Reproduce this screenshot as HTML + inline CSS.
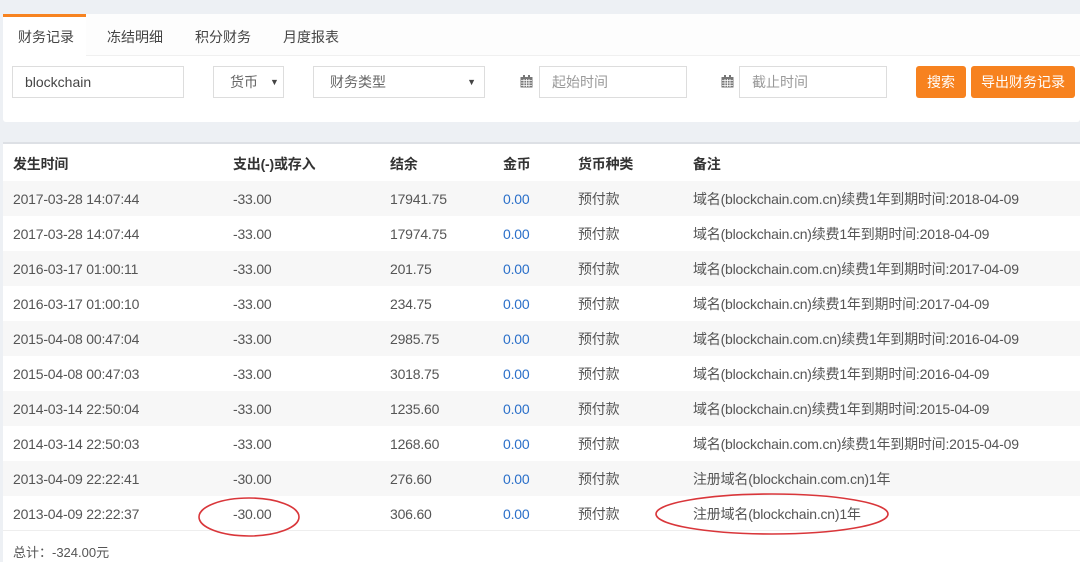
<!DOCTYPE html>
<html><head><meta charset="utf-8"><style>
*{margin:0;padding:0;box-sizing:border-box}
body{width:1080px;height:562px;overflow:hidden;background:#edf0f4;font-family:"Liberation Sans","Noto Sans CJK SC",sans-serif;color:#555;font-size:14px;position:relative}
.a{position:absolute}
.p1{left:3px;top:14px;width:1077px;height:108px;background:#fff;border-radius:3px}
.tabbar{left:3px;top:14px;width:1077px;height:42px;background:#fdfdfd;border-bottom:1px solid #f0f0f0}
.tab{top:0;height:42px;line-height:46px;font-size:14px;color:#444}
.act{left:3px;top:14px;width:83px;height:43px;background:#fff;border-top:3px solid #f78320}
.inp{height:32px;border:1px solid #ddd;background:#fff;line-height:30px;padding-left:12px;color:#999;font-size:14px}
.btn{background:#f7821f;color:#fff;height:32px;line-height:32px;text-align:center;border-radius:3px;font-size:14px}
.p2{left:3px;top:142px;width:1077px;height:420px;background:#fff;border-top:2px solid #dde0e5}
.row{left:3px;width:1077px;height:35px}
.row span{position:absolute;top:1px;line-height:35px;font-size:14px;color:#555;letter-spacing:-0.2px}
.hd span{font-weight:bold;color:#333;line-height:40px}
.b{color:#2a6fc9!important}
</style></head><body>
<div class="a p1"></div>
<div class="a tabbar"></div>
<div class="a act"></div>
<div class="a tab" style="left:18px;top:14px">财务记录</div>
<div class="a tab" style="left:107px;top:14px">冻结明细</div>
<div class="a tab" style="left:195px;top:14px">积分财务</div>
<div class="a tab" style="left:283px;top:14px">月度报表</div>
<div class="a inp" style="left:12px;top:66px;width:172px;color:#444">blockchain</div>
<div class="a inp" style="left:213px;top:66px;width:71px;padding-left:16px;color:#666">货币<span style="position:absolute;left:56px;font-size:9px;color:#444">▼</span></div>
<div class="a inp" style="left:313px;top:66px;width:172px;padding-left:16px;color:#666">财务类型<span style="position:absolute;right:8px;font-size:9px;color:#444">▼</span></div>
<svg class="a" style="left:520px;top:75px" width="13" height="13" viewBox="0 0 13 13"><rect x="0.5" y="2" width="12" height="10.5" fill="#777"/><rect x="3" y="0" width="2" height="3" fill="#777"/><rect x="8" y="0" width="2" height="3" fill="#777"/><path d="M1 5.5h11M1 8h11M1 10.5h11M4 4v8M6.5 4v8M9 4v8" stroke="#fff" stroke-width=".8"/></svg>
<div class="a inp" style="left:539px;top:66px;width:148px">起始时间</div>
<svg class="a" style="left:721px;top:75px" width="13" height="13" viewBox="0 0 13 13"><rect x="0.5" y="2" width="12" height="10.5" fill="#777"/><rect x="3" y="0" width="2" height="3" fill="#777"/><rect x="8" y="0" width="2" height="3" fill="#777"/><path d="M1 5.5h11M1 8h11M1 10.5h11M4 4v8M6.5 4v8M9 4v8" stroke="#fff" stroke-width=".8"/></svg>
<div class="a inp" style="left:739px;top:66px;width:148px">截止时间</div>
<div class="a btn" style="left:916px;top:66px;width:50px">搜索</div>
<div class="a btn" style="left:971px;top:66px;width:104px">导出财务记录</div>
<div class="a p2"></div>
<div class="a row hd" style="top:143px;height:38px"><span style="left:10px">发生时间</span><span style="left:230px">支出(-)或存入</span><span style="left:387px">结余</span><span style="left:500px">金币</span><span style="left:575px">货币种类</span><span style="left:690px">备注</span></div>
<div class="a row" style="top:181px;background:#f7f7f7"><span style="left:10px">2017-03-28 14:07:44</span><span style="left:230px">-33.00</span><span style="left:387px">17941.75</span><span class="b" style="left:500px">0.00</span><span style="left:575px">预付款</span><span style="left:690px">域名(blockchain.com.cn)续费1年到期时间:2018-04-09</span></div>
<div class="a row" style="top:216px"><span style="left:10px">2017-03-28 14:07:44</span><span style="left:230px">-33.00</span><span style="left:387px">17974.75</span><span class="b" style="left:500px">0.00</span><span style="left:575px">预付款</span><span style="left:690px">域名(blockchain.cn)续费1年到期时间:2018-04-09</span></div>
<div class="a row" style="top:251px;background:#f7f7f7"><span style="left:10px">2016-03-17 01:00:11</span><span style="left:230px">-33.00</span><span style="left:387px">201.75</span><span class="b" style="left:500px">0.00</span><span style="left:575px">预付款</span><span style="left:690px">域名(blockchain.com.cn)续费1年到期时间:2017-04-09</span></div>
<div class="a row" style="top:286px"><span style="left:10px">2016-03-17 01:00:10</span><span style="left:230px">-33.00</span><span style="left:387px">234.75</span><span class="b" style="left:500px">0.00</span><span style="left:575px">预付款</span><span style="left:690px">域名(blockchain.cn)续费1年到期时间:2017-04-09</span></div>
<div class="a row" style="top:321px;background:#f7f7f7"><span style="left:10px">2015-04-08 00:47:04</span><span style="left:230px">-33.00</span><span style="left:387px">2985.75</span><span class="b" style="left:500px">0.00</span><span style="left:575px">预付款</span><span style="left:690px">域名(blockchain.com.cn)续费1年到期时间:2016-04-09</span></div>
<div class="a row" style="top:356px"><span style="left:10px">2015-04-08 00:47:03</span><span style="left:230px">-33.00</span><span style="left:387px">3018.75</span><span class="b" style="left:500px">0.00</span><span style="left:575px">预付款</span><span style="left:690px">域名(blockchain.cn)续费1年到期时间:2016-04-09</span></div>
<div class="a row" style="top:391px;background:#f7f7f7"><span style="left:10px">2014-03-14 22:50:04</span><span style="left:230px">-33.00</span><span style="left:387px">1235.60</span><span class="b" style="left:500px">0.00</span><span style="left:575px">预付款</span><span style="left:690px">域名(blockchain.cn)续费1年到期时间:2015-04-09</span></div>
<div class="a row" style="top:426px"><span style="left:10px">2014-03-14 22:50:03</span><span style="left:230px">-33.00</span><span style="left:387px">1268.60</span><span class="b" style="left:500px">0.00</span><span style="left:575px">预付款</span><span style="left:690px">域名(blockchain.com.cn)续费1年到期时间:2015-04-09</span></div>
<div class="a row" style="top:461px;background:#f7f7f7"><span style="left:10px">2013-04-09 22:22:41</span><span style="left:230px">-30.00</span><span style="left:387px">276.60</span><span class="b" style="left:500px">0.00</span><span style="left:575px">预付款</span><span style="left:690px">注册域名(blockchain.com.cn)1年</span></div>
<div class="a row" style="top:496px;border-bottom:1px solid #eee"><span style="left:10px">2013-04-09 22:22:37</span><span style="left:230px">-30.00</span><span style="left:387px">306.60</span><span class="b" style="left:500px">0.00</span><span style="left:575px">预付款</span><span style="left:690px">注册域名(blockchain.cn)1年</span></div>
<div class="a" style="left:13px;top:542px;font-size:13px;color:#555">总计：-324.00元</div>
<svg class="a" style="left:0;top:0" width="1080" height="562"><ellipse cx="249" cy="517" rx="50" ry="19" fill="none" stroke="#d9363a" stroke-width="1.6"/><ellipse cx="772" cy="514" rx="116" ry="20" fill="none" stroke="#d9363a" stroke-width="1.6"/></svg>
</body></html>
